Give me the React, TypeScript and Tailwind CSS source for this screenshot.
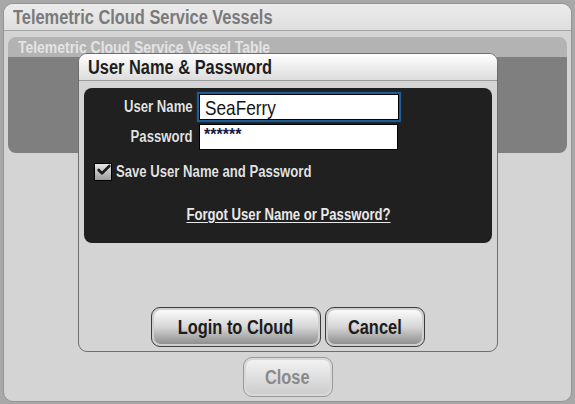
import type { ReactNode } from 'react';
import { Check } from 'lucide-react';

// Liberation Sans squeezed to match the narrow Helvetica of the original
function Narrow({ children, origin = 'origin-left', className = '' }: { children: ReactNode; origin?: string; className?: string }) {
  return <span className={`inline-block scale-x-[0.82] whitespace-nowrap ${origin} ${className}`}>{children}</span>;
}

function GlossButton({ label, className = '', disabled = false }: { label: string; className?: string; disabled?: boolean }) {
  return (
    <button
      className={`flex h-[40px] items-center justify-center rounded-[9px] border p-[2px] ${
        disabled ? 'border-[#9a9a9a] bg-[#d8d8d8]' : 'border-[#3c3c3c] bg-[#cfcfcf]'
      } ${className}`}
    >
      <span
        className={`flex h-full w-full items-center justify-center rounded-[7px] text-[20px] font-bold ${
          disabled
            ? 'bg-gradient-to-b from-[#f2f2f2] to-[#cdcdcd] text-[#8a8a8a]'
            : 'bg-gradient-to-b from-[#fafafa] via-[#d6d6d6] to-[#8f8f8f] text-[#1c1c1c]'
        }`}
      >
        <Narrow origin="origin-center">{label}</Narrow>
      </span>
    </button>
  );
}

export default function App() {
  return (
    <div className="relative h-[404px] w-[575px] overflow-hidden bg-[#a8a8a8] pl-[3px] pt-[3px] font-['Liberation_Sans',Arial,sans-serif]">
      {/* main window */}
      <div className="flex h-[399px] w-[569px] flex-col rounded-[10px] border border-[#939393] bg-[#d4d4d4]">
        <div className="flex h-[27px] items-center rounded-t-[9px] border-b border-[#a5a5a5] bg-gradient-to-b from-[#ececec] to-[#dedede] pl-[9px]">
          <span className="text-[20px] font-bold leading-none text-[#7a7a7a]">
            <Narrow>Telemetric Cloud Service Vessels</Narrow>
          </span>
        </div>

        <div className="mx-[4px] mt-[6px] flex h-[116px] flex-col overflow-hidden rounded-[8px]">
          <div className="flex h-[20px] items-center bg-[#b3b3b3] pl-[10px]">
            <span className="text-[17px] font-bold leading-none text-[#e4e4e4]">
              <Narrow>Telemetric Cloud Service Vessel Table</Narrow>
            </span>
          </div>
          <div className="flex-1 bg-[#7f7f7f]" />
        </div>

        <div className="flex-1" />
        <GlossButton label="Close" disabled className="mb-[4px] w-[90px] self-center" />
      </div>

      {/* login dialog */}
      <div className="absolute left-[78px] top-[53px] flex h-[299px] w-[420px] flex-col rounded-[9px] border border-[#6e6e6e] bg-[#d4d4d4]">
        <div className="flex h-[27px] items-center rounded-t-[8px] border-b border-[#9c9c9c] bg-gradient-to-b from-[#ffffff] to-[#dcdcdc] pl-[9px]">
          <span className="text-[20px] font-bold leading-none text-[#1e1e1e]">
            <Narrow>User Name &amp; Password</Narrow>
          </span>
        </div>

        <div className="mx-[5px] mt-[7px] flex h-[155px] flex-col rounded-[8px] bg-[#202020] pt-[6px]">
          <div className="flex items-center gap-[6px]">
            <span className="flex w-[109px] justify-end text-[16px] font-bold text-[#e2e2e2] [text-shadow:0_0_1px_#000]">
              <Narrow origin="origin-right">User Name</Narrow>
            </span>
            <div className="flex h-[26px] w-[200px] items-center border border-black bg-white pl-[5px] shadow-[0_0_1px_2px_#1c5d95]">
              <span className="text-[21px] leading-none text-[#151515]">
                <Narrow>SeaFerry</Narrow>
              </span>
            </div>
          </div>
          <div className="mt-[4px] flex items-center gap-[6px]">
            <span className="flex w-[109px] justify-end text-[16px] font-bold text-[#e2e2e2] [text-shadow:0_0_1px_#000]">
              <Narrow origin="origin-right">Password</Narrow>
            </span>
            <div className="flex h-[26px] w-[199px] items-start border border-black bg-white pl-[4px] pt-[2px]">
              <span className="text-[16px] font-bold leading-none text-[#1b1b40]">******</span>
            </div>
          </div>

          <div className="mt-[10px] flex items-center pl-[10px]">
            <div className="relative h-[18px] w-[18px] border border-black bg-gradient-to-b from-[#e6e6e6] to-[#9d9d9d]">
              <Check className="absolute -top-[2px] left-[1px] h-[16px] w-[16px] text-[#1a1a1a]" strokeWidth={4} />
            </div>
            <span className="ml-[4px] text-[16px] font-bold text-[#e2e2e2] [text-shadow:0_0_1px_#000]">
              <Narrow>Save User Name and Password</Narrow>
            </span>
          </div>

          <div className="mt-[19px] flex justify-center">
            <span className="text-[16px] font-bold text-[#e8e8e8]">
              <Narrow origin="origin-center" className="underline underline-offset-2">
                Forgot User Name or Password?
              </Narrow>
            </span>
          </div>
        </div>

        <div className="flex-1" />
        <div className="mb-[4px] flex justify-center gap-[4px]">
          <GlossButton label="Login to Cloud" className="w-[170px]" />
          <GlossButton label="Cancel" className="w-[100px]" />
        </div>
      </div>
    </div>
  );
}
